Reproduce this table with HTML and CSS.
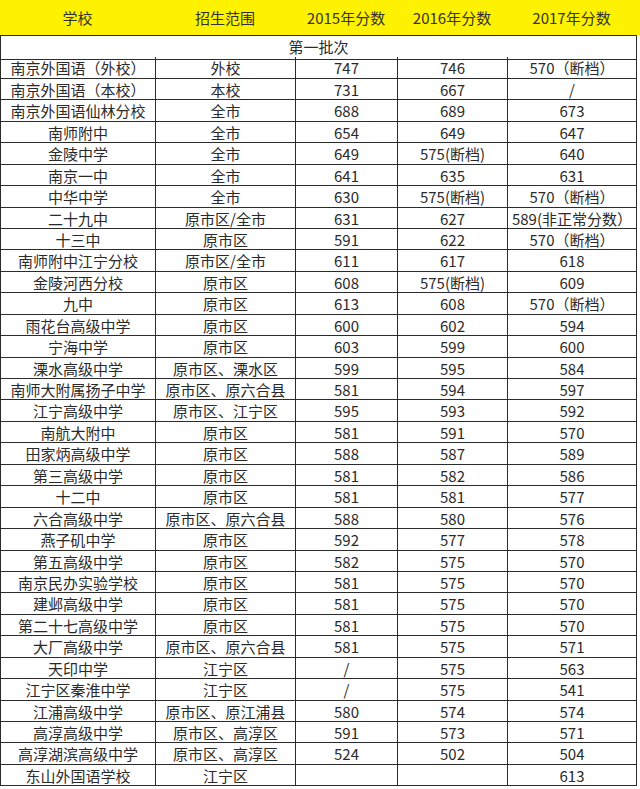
FILE: index.html
```html
<!DOCTYPE html>
<html lang="zh">
<head>
<meta charset="utf-8">
<title>招生分数</title>
<link rel="stylesheet" href="styles.css">
</head>
<body>
<div class="head">
  <div>学校</div><div>招生范围</div><div>2015年分数</div><div>2016年分数</div><div>2017年分数</div>
</div>
<div class="grid">
  <div class="c batch">第一批次</div>
  <div class="c">南京外国语（外校）</div><div class="c">外校</div><div class="c">747</div><div class="c">746</div><div class="c">570（断档）</div>
  <div class="c">南京外国语（本校）</div><div class="c">本校</div><div class="c">731</div><div class="c">667</div><div class="c">/</div>
  <div class="c">南京外国语仙林分校</div><div class="c">全市</div><div class="c">688</div><div class="c">689</div><div class="c">673</div>
  <div class="c">南师附中</div><div class="c">全市</div><div class="c">654</div><div class="c">649</div><div class="c">647</div>
  <div class="c">金陵中学</div><div class="c">全市</div><div class="c">649</div><div class="c">575(断档)</div><div class="c">640</div>
  <div class="c">南京一中</div><div class="c">全市</div><div class="c">641</div><div class="c">635</div><div class="c">631</div>
  <div class="c">中华中学</div><div class="c">全市</div><div class="c">630</div><div class="c">575(断档)</div><div class="c">570（断档）</div>
  <div class="c">二十九中</div><div class="c">原市区/全市</div><div class="c">631</div><div class="c">627</div><div class="c">589(非正常分数）</div>
  <div class="c">十三中</div><div class="c">原市区</div><div class="c">591</div><div class="c">622</div><div class="c">570（断档）</div>
  <div class="c">南师附中江宁分校</div><div class="c">原市区/全市</div><div class="c">611</div><div class="c">617</div><div class="c">618</div>
  <div class="c">金陵河西分校</div><div class="c">原市区</div><div class="c">608</div><div class="c">575(断档)</div><div class="c">609</div>
  <div class="c">九中</div><div class="c">原市区</div><div class="c">613</div><div class="c">608</div><div class="c">570（断档）</div>
  <div class="c">雨花台高级中学</div><div class="c">原市区</div><div class="c">600</div><div class="c">602</div><div class="c">594</div>
  <div class="c">宁海中学</div><div class="c">原市区</div><div class="c">603</div><div class="c">599</div><div class="c">600</div>
  <div class="c">溧水高级中学</div><div class="c">原市区、溧水区</div><div class="c">599</div><div class="c">595</div><div class="c">584</div>
  <div class="c">南师大附属扬子中学</div><div class="c">原市区、原六合县</div><div class="c">581</div><div class="c">594</div><div class="c">597</div>
  <div class="c">江宁高级中学</div><div class="c">原市区、江宁区</div><div class="c">595</div><div class="c">593</div><div class="c">592</div>
  <div class="c">南航大附中</div><div class="c">原市区</div><div class="c">581</div><div class="c">591</div><div class="c">570</div>
  <div class="c">田家炳高级中学</div><div class="c">原市区</div><div class="c">588</div><div class="c">587</div><div class="c">589</div>
  <div class="c">第三高级中学</div><div class="c">原市区</div><div class="c">581</div><div class="c">582</div><div class="c">586</div>
  <div class="c">十二中</div><div class="c">原市区</div><div class="c">581</div><div class="c">581</div><div class="c">577</div>
  <div class="c">六合高级中学</div><div class="c">原市区、原六合县</div><div class="c">588</div><div class="c">580</div><div class="c">576</div>
  <div class="c">燕子矶中学</div><div class="c">原市区</div><div class="c">592</div><div class="c">577</div><div class="c">578</div>
  <div class="c">第五高级中学</div><div class="c">原市区</div><div class="c">582</div><div class="c">575</div><div class="c">570</div>
  <div class="c">南京民办实验学校</div><div class="c">原市区</div><div class="c">581</div><div class="c">575</div><div class="c">570</div>
  <div class="c">建邺高级中学</div><div class="c">原市区</div><div class="c">581</div><div class="c">575</div><div class="c">570</div>
  <div class="c">第二十七高级中学</div><div class="c">原市区</div><div class="c">581</div><div class="c">575</div><div class="c">570</div>
  <div class="c">大厂高级中学</div><div class="c">原市区、原六合县</div><div class="c">581</div><div class="c">575</div><div class="c">571</div>
  <div class="c">天印中学</div><div class="c">江宁区</div><div class="c">/</div><div class="c">575</div><div class="c">563</div>
  <div class="c">江宁区秦淮中学</div><div class="c">江宁区</div><div class="c">/</div><div class="c">575</div><div class="c">541</div>
  <div class="c">江浦高级中学</div><div class="c">原市区、原江浦县</div><div class="c">580</div><div class="c">574</div><div class="c">574</div>
  <div class="c">高淳高级中学</div><div class="c">原市区、高淳区</div><div class="c">591</div><div class="c">573</div><div class="c">571</div>
  <div class="c">高淳湖滨高级中学</div><div class="c">原市区、高淳区</div><div class="c">524</div><div class="c">502</div><div class="c">504</div>
  <div class="c">东山外国语学校</div><div class="c">江宁区</div><div class="c"></div><div class="c"></div><div class="c">613</div>
</div>
</body>
</html>
```
FILE: styles.css
```css
html, body {
  margin: 0;
  padding: 0;
  background: #ffffff;
}
body {
  width: 640px;
  font-family: "Noto Sans CJK SC", "Microsoft YaHei", sans-serif;
  font-size: 15px;
  color: #2a2a2a;
}
.head {
  display: grid;
  grid-template-columns: 155px 140px 102px 110px 129px;
  height: 35px;
  background: #fff200;
  align-items: center;
  color: #333333;
}
.head div {
  text-align: center;
  line-height: 35px;
}
.grid {
  display: grid;
  grid-template-columns: 155px 140px 102px 110px 129px;
  grid-auto-rows: 21.45px;
  width: 636px;
  border-top: 1px solid #2b2b2b;
  border-left: 1px solid #2b2b2b;
}
.c {
  border-right: 1px solid #2b2b2b;
  border-bottom: 1px solid #2b2b2b;
  text-align: center;
  line-height: 21px;
  white-space: nowrap;
  overflow: hidden;
}
.batch {
  grid-column: 1 / -1;
  height: 23px;
  line-height: 22px;
}
```
